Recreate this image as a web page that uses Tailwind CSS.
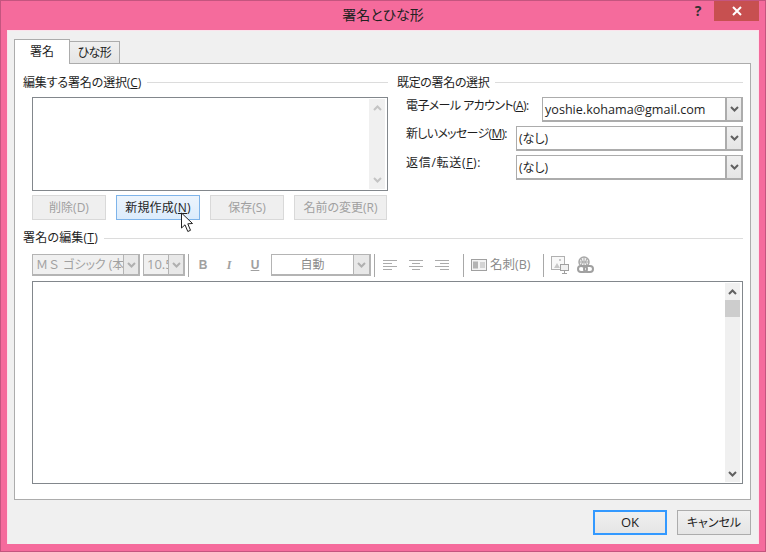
<!DOCTYPE html>
<html lang="ja">
<head>
<meta charset="utf-8">
<script src="https://cdn.jsdelivr.net/npm/@tailwindcss/browser@4"></script>
</head>
<body class="m-0">
<div class="relative w-[766px] h-[552px] overflow-hidden flex flex-col bg-[#f56b9c] border border-[#c4557f] text-[12px] text-[#1e1e1e] [font-feature-settings:'palt'] font-['Open_Sans','Noto_Sans_CJK_JP',sans-serif]">
  <!-- title bar -->
  <div class="relative h-[29px] shrink-0 flex items-center justify-center text-[14px] text-[#222]">
    <span class="-mt-[2px]">署名とひな形</span>
    <div class="absolute right-[6px] top-0 flex items-start">
      <span class="w-[20px] mr-[6px] text-center font-bold text-[14px] leading-[20px] text-[#333]">?</span>
      <div class="w-[45px] h-[20px] bg-[#c75050] flex items-center justify-center">
        <svg width="10" height="10" viewBox="0 0 10 10"><path d="M1 1L9 9M9 1L1 9" stroke="#fff" stroke-width="2"/></svg>
      </div>
    </div>
  </div>
  <!-- client -->
  <div class="mx-[6px] mb-[7px] flex-1 flex flex-col bg-[#f0f0f0] border-t border-x border-[#fbe3ec] px-[6px] pt-[8px]">
    <!-- tabs -->
    <div class="flex items-end h-[24px] relative z-10">
      <div class="w-[56px] h-[25px] -mb-px bg-white border border-b-0 border-[#acacac] flex items-center justify-center">署名</div>
      <div class="w-[51px] h-[22px] -ml-px bg-gradient-to-b from-[#f0f0f0] to-[#e5e5e5] border border-b-0 border-[#acacac] flex items-center justify-center tracking-[-0.5px]">ひな形</div>
    </div>
    <!-- page -->
    <div class="w-[737px] h-[437px] bg-white border border-[#acacac] pl-[8px] pr-[6px] pt-[10px]">
      <div class="flex gap-[9px]">
        <!-- left column -->
        <div class="w-[365px]">
          <div class="h-[16px] flex items-center gap-[6px]"><span class="pt-px tracking-[-0.15px]">編集する署名の選択(<u>C</u>)</span><div class="flex-1 h-px bg-[#dcdcdc]"></div></div>
          <div class="ml-[9px] mt-[7px] h-[94px] border border-[#82878c] bg-white flex justify-end p-px">
            <div class="w-[16px] mr-px bg-[#f0f0f0] flex flex-col justify-between items-center py-[6px]">
              <svg width="9" height="6" viewBox="0 0 9 6"><path d="M1 5L4.500 1.500L8 5" fill="none" stroke="#c4c4c4" stroke-width="2"/></svg>
              <svg width="9" height="6" viewBox="0 0 9 6"><path d="M1 1L4.500 4.500L8 1" fill="none" stroke="#c4c4c4" stroke-width="2"/></svg>
            </div>
          </div>
          <div class="ml-[9px] mt-[4px] flex h-[25px] gap-[10px]">
            <div class="w-[74px] pt-px border border-[#d9d9d9] bg-[#efefef] text-[#a0a0a0] flex items-center justify-center">削除(D)</div>
            <div class="w-[84px] pt-px border border-[#7eb4ea] bg-gradient-to-b from-[#ecf4fc] to-[#dcecfc] flex items-center justify-center tracking-[0.2px]">新規作成(<u>N</u>)</div>
            <div class="w-[74px] pt-px border border-[#d9d9d9] bg-[#efefef] text-[#a0a0a0] flex items-center justify-center">保存(S)</div>
            <div class="w-[93px] pt-px border border-[#d9d9d9] bg-[#efefef] text-[#a0a0a0] flex items-center justify-center">名前の変更(R)</div>
          </div>
        </div>
        <!-- right column -->
        <div class="w-[346px]">
          <div class="h-[16px] flex items-center gap-[6px]"><span class="pt-px tracking-[-0.35px]">既定の署名の選択</span><div class="flex-1 h-px bg-[#dcdcdc]"></div></div>
          <div class="mt-[7px] flex flex-col gap-[4px]">
            <div class="flex justify-between h-[25px]">
              <span class="ml-[9px] pt-px leading-[16px] whitespace-nowrap tracking-[-0.6px]">電子メール アカウント(<u>A</u>):</span>
              <div class="w-[201px] shrink-0 border-2 border-[#acacac] border-l border-t flex bg-white">
                <span class="flex-1 pl-[2px] text-[12.600px] leading-[23px] whitespace-nowrap">yoshie.kohama@gmail.com</span>
                <div class="w-[16px] border-l-2 border-[#acacac] bg-gradient-to-b from-[#f0f0f0] to-[#e5e5e5] flex items-center justify-center">
                  <svg width="9" height="6" viewBox="0 0 9 6"><path d="M1 1L4.500 4.500L8 1" fill="none" stroke="#606060" stroke-width="2"/></svg>
                </div>
              </div>
            </div>
            <div class="flex justify-between h-[25px]">
              <span class="ml-[9px] leading-[16px] whitespace-nowrap tracking-[-0.7px]">新しいメッセージ(<u>M</u>):</span>
              <div class="w-[227px] shrink-0 border-2 border-[#acacac] border-l border-t flex bg-white">
                <span class="flex-1 pl-[2px] leading-[23px]">(なし)</span>
                <div class="w-[16px] border-l-2 border-[#acacac] bg-gradient-to-b from-[#f0f0f0] to-[#e5e5e5] flex items-center justify-center">
                  <svg width="9" height="6" viewBox="0 0 9 6"><path d="M1 1L4.500 4.500L8 1" fill="none" stroke="#606060" stroke-width="2"/></svg>
                </div>
              </div>
            </div>
            <div class="flex justify-between h-[25px]">
              <span class="ml-[9px] leading-[16px] whitespace-nowrap tracking-[0.7px]">返信/転送(<u>F</u>):</span>
              <div class="w-[227px] shrink-0 border-2 border-[#acacac] border-l border-t flex bg-white">
                <span class="flex-1 pl-[2px] leading-[23px]">(なし)</span>
                <div class="w-[16px] border-l-2 border-[#acacac] bg-gradient-to-b from-[#f0f0f0] to-[#e5e5e5] flex items-center justify-center">
                  <svg width="9" height="6" viewBox="0 0 9 6"><path d="M1 1L4.500 4.500L8 1" fill="none" stroke="#606060" stroke-width="2"/></svg>
                </div>
              </div>
            </div>
          </div>
        </div>
      </div>
      <!-- edit section -->
      <div class="mt-[10px] h-[16px] w-[720px] flex items-center gap-[6px]"><span class="tracking-[0.2px]">署名の編集(<u>T</u>)</span><div class="flex-1 h-px bg-[#dcdcdc]"></div></div>
      <!-- toolbar -->
      <div class="ml-[9px] mt-[7px] h-[24px] w-[711px] flex items-center text-[#a0a0a0]">
        <div class="w-[108px] h-[22px] border-2 border-l border-t border-[#b4b4b4] bg-[#f0f0f0] flex">
          <span class="flex-1 overflow-hidden whitespace-nowrap pl-[3px] leading-[19px]"><span class="[font-feature-settings:normal]">ＭＳ</span> ゴシック (本文</span>
          <div class="w-[15px] shrink-0 border-l border-[#b4b4b4] bg-[#e8e8e8] flex items-center justify-center"><svg width="9" height="6" viewBox="0 0 9 6"><path d="M1 1L4.500 4.500L8 1" fill="none" stroke="#b0b0b0" stroke-width="2"/></svg></div>
        </div>
        <div class="ml-[3px] w-[42px] h-[22px] border-2 border-l border-t border-[#b4b4b4] bg-[#f0f0f0] flex">
          <span class="flex-1 overflow-hidden whitespace-nowrap pl-[3px] text-[13px] leading-[19px]">10.5</span>
          <div class="w-[15px] shrink-0 border-l border-[#b4b4b4] bg-[#e8e8e8] flex items-center justify-center"><svg width="9" height="6" viewBox="0 0 9 6"><path d="M1 1L4.500 4.500L8 1" fill="none" stroke="#b0b0b0" stroke-width="2"/></svg></div>
        </div>
        <div class="ml-[3px] w-px h-[23px] bg-[#a8a8a8]"></div>
        <span class="w-[26px] ml-[1px] text-center font-bold font-['Liberation_Sans',sans-serif]">B</span>
        <span class="w-[26px] text-center font-bold italic font-['Liberation_Serif',serif]">I</span>
        <span class="w-[26px] text-center font-bold underline font-['Liberation_Sans',sans-serif]">U</span>
        <div class="ml-[3px] w-[100px] h-[22px] border-2 border-l border-t border-[#b4b4b4] bg-white flex">
          <span class="flex-1 text-center leading-[19px] text-[#8a8a8a]">自動</span>
          <div class="w-[16px] shrink-0 border-l border-[#b4b4b4] bg-[#e8e8e8] flex items-center justify-center"><svg width="9" height="6" viewBox="0 0 9 6"><path d="M1 1L4.500 4.500L8 1" fill="none" stroke="#b0b0b0" stroke-width="2"/></svg></div>
        </div>
        <div class="ml-[3px] w-px h-[23px] bg-[#a8a8a8]"></div>
        <svg class="ml-[8px]" width="15" height="12" viewBox="0 0 15 12"><path d="M0 1.500H14M0 4.500H9M0 7.500H14M0 10.500H9" stroke="#ababab"/></svg>
        <svg class="ml-[11px]" width="15" height="12" viewBox="0 0 15 12"><path d="M0 1.500H14M3 4.500H11M0 7.500H14M3 10.500H11" stroke="#ababab"/></svg>
        <svg class="ml-[11px]" width="15" height="12" viewBox="0 0 15 12"><path d="M0 1.500H14M5 4.500H14M0 7.500H14M5 10.500H14" stroke="#ababab"/></svg>
        <div class="ml-[13px] w-px h-[23px] bg-[#a8a8a8]"></div>
        <svg class="ml-[7px]" width="17" height="13" viewBox="0 0 17 13"><rect x="0.500" y="0.500" width="15" height="11" fill="#f4f4f4" stroke="#a0a0a0"/><rect x="2" y="2.500" width="5" height="7" fill="#b4b4b4"/><path d="M9 4H14M9 6H14M9 8H14" stroke="#b4b4b4"/></svg>
        <span class="ml-[2px] w-[44px] text-[#8a8a8a] text-[12.500px] whitespace-nowrap">名刺(B)</span>
        <div class="ml-[9px] w-px h-[23px] bg-[#a8a8a8]"></div>
        <svg class="ml-[7px]" width="18" height="18" viewBox="0 0 18 18"><rect x="0.500" y="0.500" width="13" height="13" fill="#f8f8f8" stroke="#b0b0b0"/><path d="M3 12L6 7L9 12Z" fill="#c8c8c8"/><rect x="8" y="3" width="2" height="2" fill="#c8c8c8"/><rect x="9.500" y="8.500" width="8" height="6" fill="#f0f0f0" stroke="#a0a0a0"/><path d="M13.500 15V17M11 17.500H16" stroke="#a0a0a0"/></svg>
        <svg class="ml-[8px]" width="17" height="18" viewBox="0 0 17 18"><circle cx="7" cy="6" r="5" fill="#f0f0f0" stroke="#a8a8a8" stroke-width="1.500"/><path d="M2 6H12M7 1V11M4 2.500Q7 6 4 9.500M10 2.500Q7 6 10 9.500" fill="none" stroke="#a8a8a8"/><rect x="1" y="10" width="9" height="6" rx="3" fill="none" stroke="#a0a0a0" stroke-width="2"/><rect x="7" y="10" width="9" height="6" rx="3" fill="none" stroke="#a0a0a0" stroke-width="2"/></svg>
      </div>
      <!-- editor -->
      <div class="ml-[9px] mt-[4px] h-[203px] w-[711px] border border-[#82878c] bg-white flex justify-end p-px">
        <div class="w-[15px] mr-px bg-[#f0f0f0] flex flex-col">
          <div class="h-[17px] flex items-center justify-center"><svg width="9" height="6" viewBox="0 0 9 6"><path d="M1 5L4.500 1.500L8 5" fill="none" stroke="#606060" stroke-width="2"/></svg></div>
          <div class="h-[17px] bg-[#cdcdcd]"></div>
          <div class="flex-1"></div>
          <div class="h-[17px] flex items-center justify-center"><svg width="9" height="6" viewBox="0 0 9 6"><path d="M1 1L4.500 4.500L8 1" fill="none" stroke="#606060" stroke-width="2"/></svg></div>
        </div>
      </div>
    </div>
    <!-- footer -->
    <div class="mt-[10px] w-[737px] flex justify-end gap-[10px]">
      <div class="w-[74px] h-[25px] border-2 border-[#3399ff] bg-gradient-to-b from-[#f0f0f0] to-[#e5e5e5] flex items-center justify-center text-[13px]">OK</div>
      <div class="w-[74px] h-[25px] border border-[#acacac] bg-gradient-to-b from-[#f0f0f0] to-[#e5e5e5] flex items-center justify-center">キャンセル</div>
    </div>
  </div>
  <!-- mouse cursor -->
  <svg class="absolute left-[179px] top-[211px]" width="14" height="21" viewBox="0 0 14 21"><path d="M1.500 1L1.500 16L5 12.800L7.800 19.500L10.500 18.300L7.800 11.800L12.500 11.500Z" fill="#fff" stroke="#222" stroke-width="1"/></svg>
</div>
</body>
</html>
